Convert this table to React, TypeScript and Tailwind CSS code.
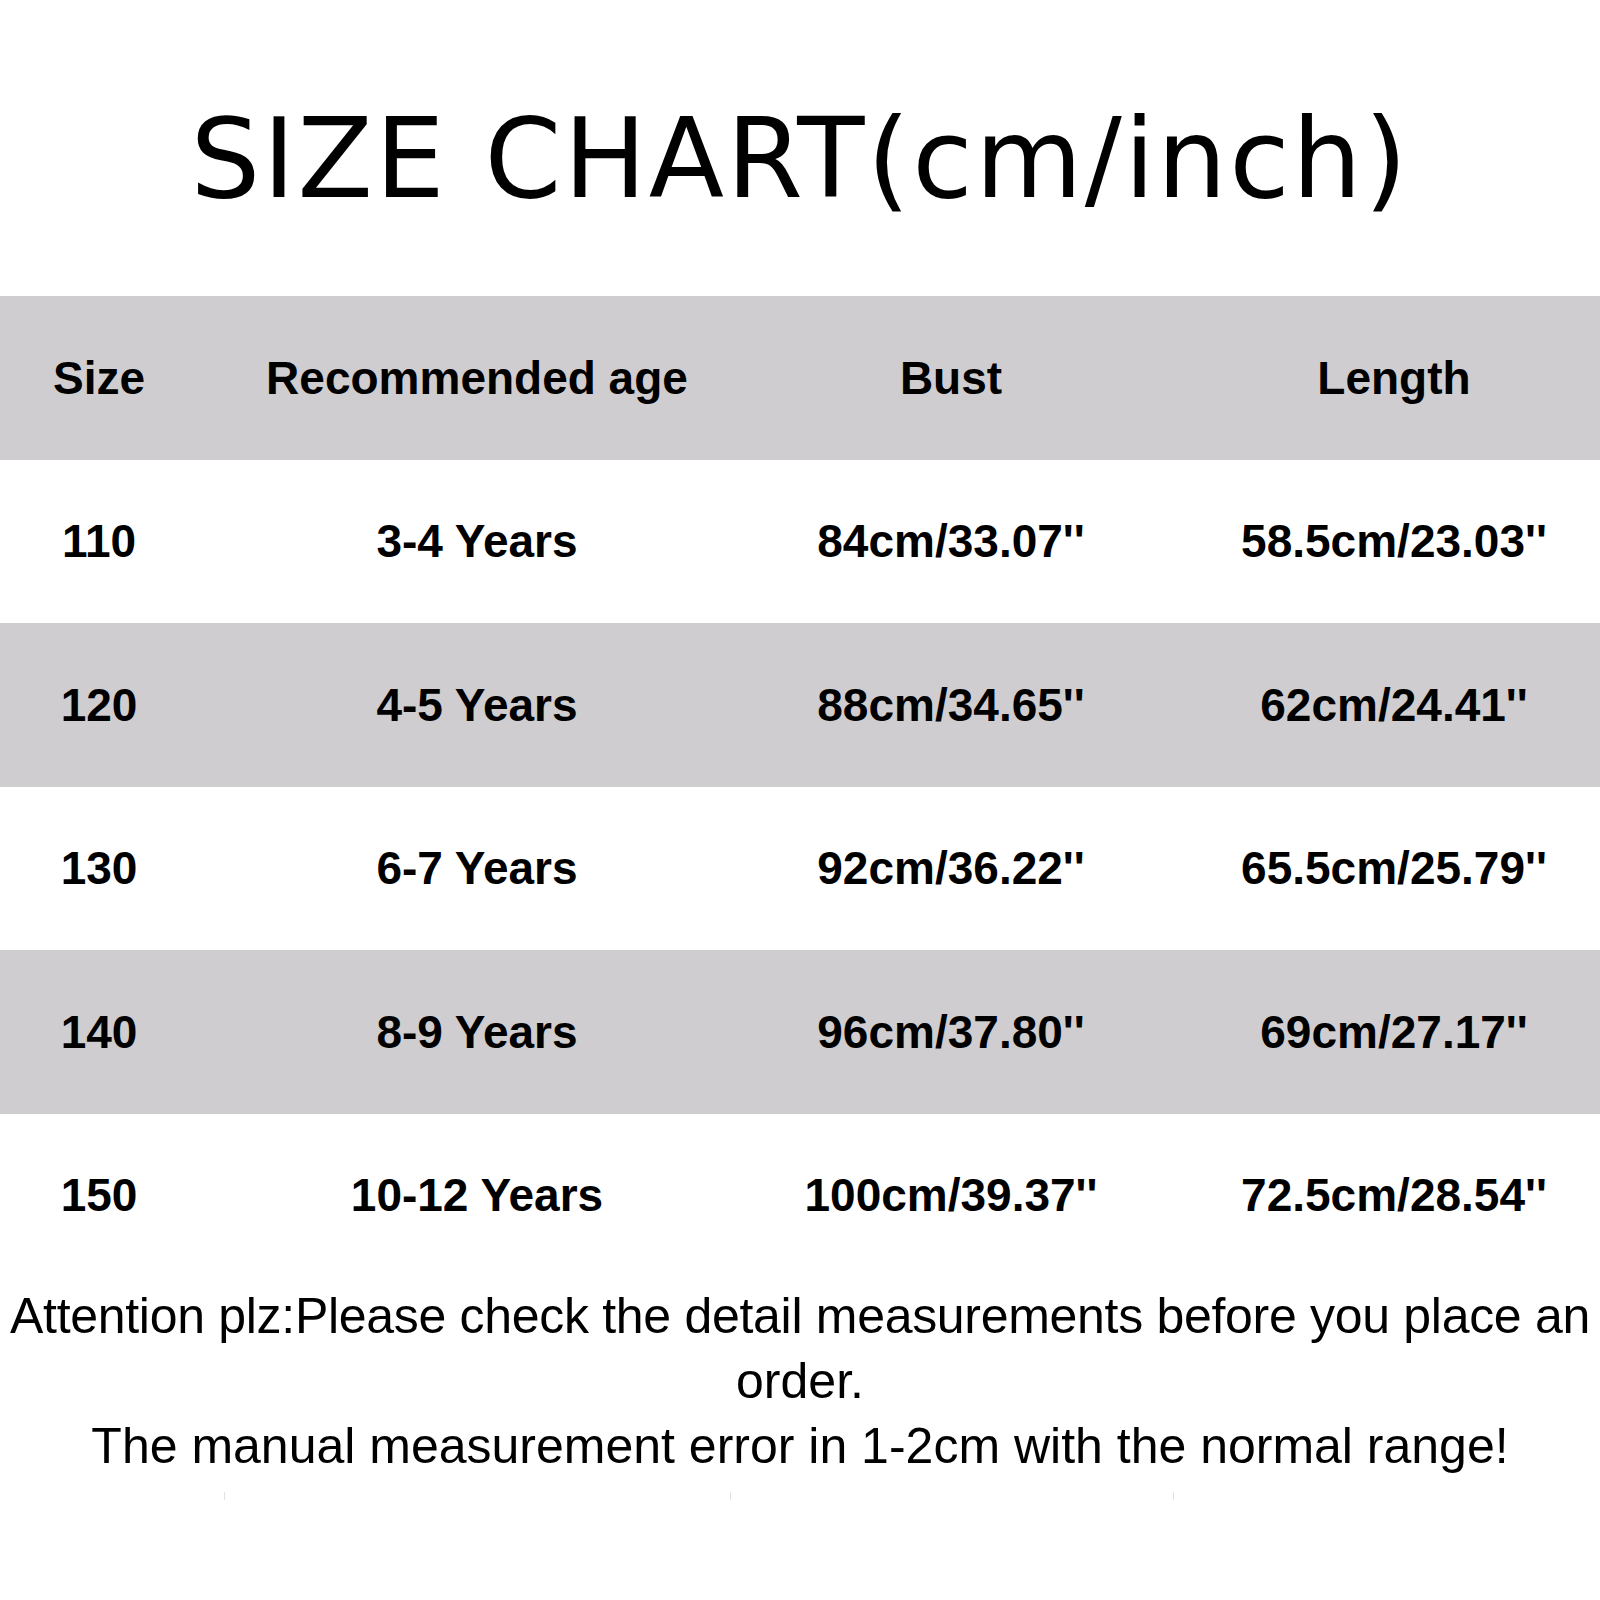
const rows = [
  { size: '110', age: '3-4 Years', bust: "84cm/33.07''", length: "58.5cm/23.03''" },
  { size: '120', age: '4-5 Years', bust: "88cm/34.65''", length: "62cm/24.41''" },
  { size: '130', age: '6-7 Years', bust: "92cm/36.22''", length: "65.5cm/25.79''" },
  { size: '140', age: '8-9 Years', bust: "96cm/37.80''", length: "69cm/27.17''" },
  { size: '150', age: '10-12 Years', bust: "100cm/39.37''", length: "72.5cm/28.54''" },
];

const Row = ({ cells, shaded }: { cells: string[]; shaded: boolean }) => (
  <div
    className={`grid h-[163.5px] grid-cols-[198px_558px_390px_1fr] items-center text-[46px] font-bold leading-none text-black ${
      shaded ? 'bg-[#cfcdcf]' : 'bg-white'
    }`}
  >
    <div className="text-center">{cells[0]}</div>
    <div className="text-center">{cells[1]}</div>
    <div className="text-center">{cells[2]}</div>
    <div className="pl-[42px] text-center">{cells[3]}</div>
  </div>
);

export default function App() {
  return (
    <div className="h-[1600px] w-[1600px] bg-white font-['Liberation_Sans',Arial,sans-serif] text-black">
      <div className="pt-[104px] text-center font-['DejaVu_Sans',sans-serif] text-[110px] leading-none tracking-[2.4px]">
        SIZE CHART(cm/inch)
      </div>

      <div className="mt-[82px]">
        <Row cells={['Size', 'Recommended age', 'Bust', 'Length']} shaded />
        {rows.map((r, i) => (
          <Row key={r.size} cells={[r.size, r.age, r.bust, r.length]} shaded={i % 2 === 1} />
        ))}
      </div>

      <div className="mt-[7px] text-center text-[50px] leading-[65px]">
        <div className="whitespace-nowrap tracking-[-0.3px]">
          Attention plz:Please check the detail measurements before you place an
        </div>
        <div>order.</div>
        <div className="whitespace-nowrap">The manual measurement error in 1-2cm with the normal range!</div>
      </div>

      <div className="mt-[13px] flex h-[8px]">
        <div className="ml-[224px] w-px bg-[#e2e2e2]" />
        <div className="ml-[505px] w-px bg-[#e2e2e2]" />
        <div className="ml-[442px] w-px bg-[#e2e2e2]" />
      </div>
    </div>
  );
}
